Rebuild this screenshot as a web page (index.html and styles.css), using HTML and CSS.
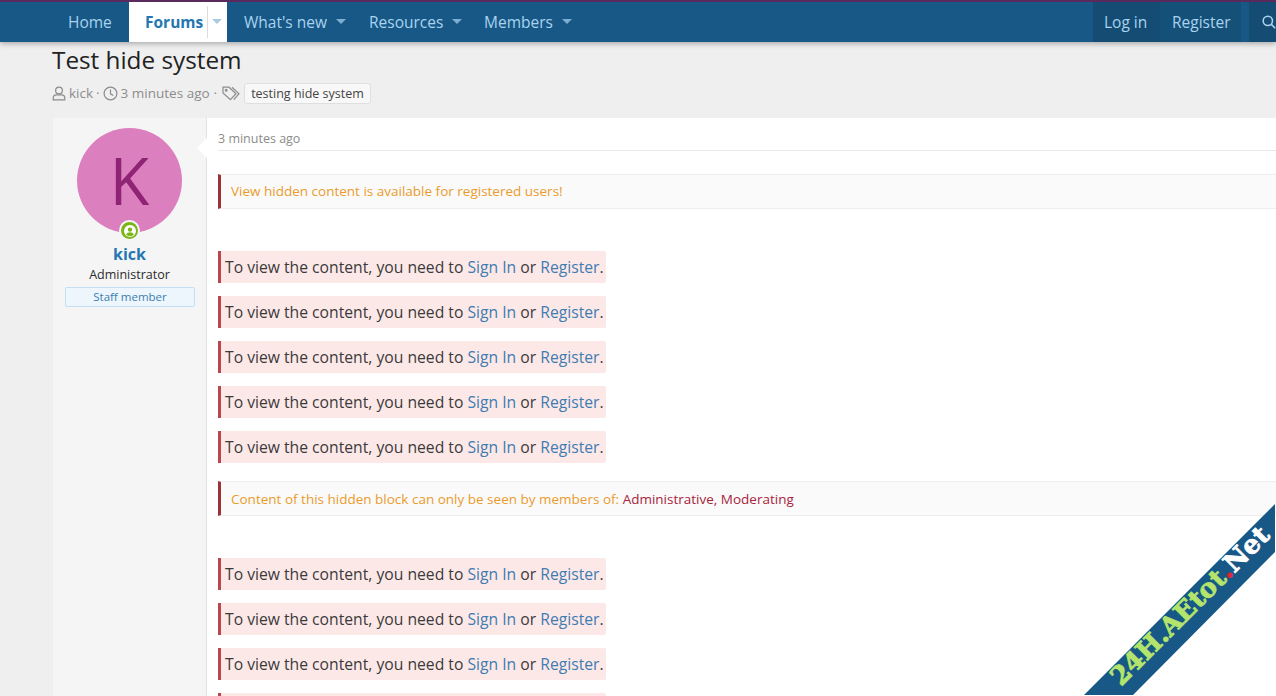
FILE: index.html
```html
<!DOCTYPE html>
<html lang="en">
<head>
<meta charset="utf-8">
<title>Test hide system</title>
<link rel="stylesheet" href="styles.css">
</head>
<body>
<header class="nav">
  <nav class="nav-left">
    <a class="nav-item nav-home">Home</a>
    <a class="nav-item nav-active">Forums<span class="split"></span><i class="caret"></i></a>
    <a class="nav-item nav-whats">What's new<i class="caret"></i></a>
    <a class="nav-item nav-res">Resources<i class="caret"></i></a>
    <a class="nav-item nav-mem">Members<i class="caret"></i></a>
  </nav>
  <div class="nav-right">
    <a class="nav-btn nav-login">Log in</a>
    <a class="nav-btn nav-reg">Register</a>
    <a class="nav-btn nav-search">
      <svg width="18" height="18" viewBox="0 0 18 18" fill="none" stroke="#a9d3ef" stroke-width="2"><circle cx="7.5" cy="7.5" r="6"/><path d="M12 12l5 5"/></svg>
    </a>
  </div>
</header>
<main class="page">
  <h1 class="title">Test hide system</h1>
  <div class="meta">
    <svg class="mi" width="14" height="15" viewBox="0 0 14 15" fill="none" stroke="#8c8c8c" stroke-width="1.2"><circle cx="7" cy="4.5" r="3.4"/><path d="M1.2 13.8v-1.600c0-2 1.400-3.300 3.200-3.300h5.200c1.800 0 3.200 1.300 3.200 3.300v1.600z"/></svg>
    <span>kick</span><span class="dot">·</span>
    <svg class="mi" width="15" height="15" viewBox="0 0 15 15" fill="none" stroke="#8c8c8c" stroke-width="1.2"><circle cx="7.5" cy="7.5" r="6.4"/><path d="M7.5 3.600v4.200l2.800 1.800"/></svg>
    <span>3 minutes ago</span><span class="dot dot-last">·</span>
    <svg class="mi" width="19" height="15" viewBox="0 0 19 15" fill="none" stroke="#8c8c8c" stroke-width="1.2"><path d="M1 1.200h6l7 6.500-5.600 6L1 7z"/><path d="M10 1.200l7 6.500-5.200 6"/><circle cx="4.200" cy="4.200" r=".9"/></svg>
    <span class="tag">testing hide system</span>
  </div>
  <article class="post">
    <aside class="user">
      <div class="avatar-wrap">
        <div class="avatar">K</div>
        <span class="online">
          <svg width="12" height="12" viewBox="0 0 11 11"><circle cx="5.500" cy="5.500" r="5.500" fill="#fff"/><circle cx="5.500" cy="4.200" r="2" fill="#7cb518"/><path d="M2 9c.6-1.700 2-2.300 3.500-2.300S8.400 7.300 9 9c-1 .9-2.200 1.300-3.500 1.300S3 9.900 2 9z" fill="#7cb518"/></svg>
        </span>
      </div>
      <div class="uname">kick</div>
      <div class="utitle">Administrator</div>
      <div class="ubanner">Staff member</div>
    </aside>
    <section class="msg">
      <div class="attr">3 minutes ago</div>
      <div class="hidden-note">View hidden content is available for registered users!</div>
      <div class="locks">
        <p class="lock">To view the content, you need to <a>Sign In</a> or <a>Register</a>.</p>
        <p class="lock">To view the content, you need to <a>Sign In</a> or <a>Register</a>.</p>
        <p class="lock">To view the content, you need to <a>Sign In</a> or <a>Register</a>.</p>
        <p class="lock">To view the content, you need to <a>Sign In</a> or <a>Register</a>.</p>
        <p class="lock">To view the content, you need to <a>Sign In</a> or <a>Register</a>.</p>
      </div>
      <div class="hidden-note second">Content of this hidden block can only be seen by members of: <b>Administrative, Moderating</b></div>
      <div class="locks">
        <p class="lock">To view the content, you need to <a>Sign In</a> or <a>Register</a>.</p>
        <p class="lock">To view the content, you need to <a>Sign In</a> or <a>Register</a>.</p>
        <p class="lock">To view the content, you need to <a>Sign In</a> or <a>Register</a>.</p>
        <p class="lock"></p>
      </div>
    </section>
  </article>
</main>
<svg class="stamp" width="192" height="192" viewBox="0 0 192 192">
  <polygon points="191,0 191,48 49,191 0,191" fill="#185886"/>
  <text class="stamp-text" transform="translate(37 183) rotate(-45)"><tspan class="st-green">24H.AEtot</tspan><tspan class="st-red">.</tspan><tspan class="st-white">Net</tspan></text>
</svg>
</body>
</html>
```
FILE: styles.css
```css
* { box-sizing: border-box; }
html, body { margin: 0; height: 696px; overflow: hidden; }
body {
  background: #efefef;
  font-family: "Open Sans", "Noto Sans", "Liberation Sans", sans-serif;
  color: #2b2b2b;
  position: relative;
}
.nav {
  height: 42px;
  background: #185886;
  border-top: 2px solid #5a2a5c;
  display: flex;
  justify-content: space-between;
  box-shadow: 0 2px 5px rgba(0,0,0,.28);
  position: relative;
  color: #a9d3ef;
  font-size: 15.500px;
  line-height: 38px;
}
.nav-left { display: flex; padding-left: 52px; }
.nav-item { display: flex; align-items: center; padding-left: 16px; padding-bottom: 1px; white-space: nowrap; }
.nav-home { width: 77px; }
.nav-active { width: 98px; background: #fff; color: #2577b1; font-weight: 700; position: relative; }
.split { position: absolute; left: 78px; top: 4px; bottom: 4px; width: 1px; background: #dcdcdc; }
.caret { width: 0; height: 0; border: 5px solid transparent; border-top: 5px solid #7fadcf; border-bottom: 0; margin-left: 9px; }
.nav-active .caret { position: absolute; left: 74px; margin-left: 9px; border-top-color: #a9cbe2; }
.nav-whats { width: 125px; padding-left: 17px; }
.nav-res { width: 115px; padding-left: 17px; }
.nav-mem { width: 110px; padding-left: 17px; }
.nav-right { display: flex; }
.nav-btn { display: flex; align-items: center; padding-bottom: 1px; background: #144c74; white-space: nowrap; }
.nav-login { width: 67px; padding-left: 11px; }
.nav-reg { width: 81px; padding-left: 12px; background: #155079; margin-right: 8px; }
.nav-search { width: 27px; padding-left: 13px; overflow: hidden; }
.page { padding: 0 0 0 52px; }
.title { margin: 0; font-weight: 400; font-size: 24.300px; line-height: 36px; color: #222; height: 36px; }
.meta { display: flex; align-items: center; height: 24px; margin-top: 3px; font-size: 13.500px; color: #8c8c8c; white-space: nowrap; }
.mi { margin-right: 3px; }
.dot { margin: 0 3px; }
.dot-last { margin: 0 5px 0 4px; }
.tag { height: 21px; line-height: 19px; padding: 0 6px; font-size: 12.500px; color: #444; background: #f8f8f8; border: 1px solid #dfdfdf; border-radius: 3px; }
.post { display: flex; margin-top: 13px; margin-left: 1px; width: 1260px; height: 578px; background: #fff; overflow: hidden; }
.user { width: 154px; flex: none; background: #f5f5f5; border-right: 1px solid #e2e2e2; padding: 10px 12px 0 12px; text-align: center; position: relative; }
.user::after { content: ""; position: absolute; right: -1px; top: 20px; width: 0; height: 0; border: 10px solid transparent; border-left: 0; border-right: 10px solid #fff; }
.avatar-wrap { position: relative; width: 105px; height: 105px; margin: 0 auto; }
.avatar { width: 105px; height: 105px; border-radius: 50%; background: #dc7fbf; color: #8e2473; font-size: 65px; line-height: 105px; text-align: center; }
.online { position: absolute; left: 42px; top: 92px; width: 21px; height: 21px; display: flex; align-items: center; justify-content: center; background: #7cb518; border: 2px solid #f5f5f5; border-radius: 50%; }
.online svg { display: block; }
.uname { margin-top: 10px; font-weight: 700; font-size: 16px; line-height: 22px; color: #2577b1; }
.utitle { font-size: 12.500px; line-height: 20px; color: #2b2b2b; }
.ubanner { height: 20px; margin: 2px -1px 0 0; line-height: 18px; font-size: 11.500px; color: #3a7eb0; background: #edf6fd; border: 1px solid #c4dff3; border-radius: 2px; }
.msg { flex: 1; padding: 10px 0 0 11px; min-width: 0; }
.attr { height: 23px; font-size: 12.500px; line-height: 21px; color: #8c8c8c; border-bottom: 1px solid #e8e8e8; }
.hidden-note { margin-top: 23px; height: 35px; line-height: 33px; padding-left: 10px; background: #fafafa; border: 1px solid #eee; border-left: 3px solid #9b3338; font-size: 13.500px; color: #ea9b2c; white-space: nowrap; }
.hidden-note b { font-weight: 400; color: #a8243a; }
.hidden-note.second { margin-top: 18px; line-height: 35px; }
.locks { margin-top: 42px; }
.lock { margin: 0 0 13px; width: 388px; height: 32px; line-height: 33px; padding-left: 4px; background: #fde8e8; border-left: 3px solid #b9474d; border-radius: 0 2px 2px 0; font-size: 15.700px; color: #3a3a3a; white-space: nowrap; }
.lock a { color: #3f7cb0; }
.stamp { position: absolute; right: 0; bottom: 0; display: block; }
.stamp-text { font-family: "DejaVu Serif", serif; font-weight: 700; font-size: 26px; stroke-width: .8px; }
.st-green { fill: #b4e46c; stroke: #b4e46c; }
.st-red { fill: #e0243a; stroke: #e0243a; }
.st-white { fill: #fff; stroke: #fff; }
```
